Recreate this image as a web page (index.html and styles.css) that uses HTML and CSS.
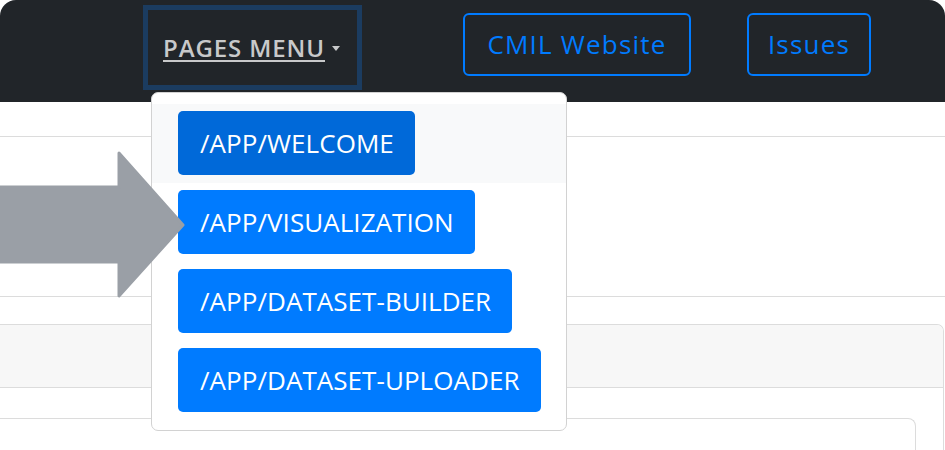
FILE: index.html
```html
<!DOCTYPE html>
<html>
<head>
<meta charset="utf-8">
<link rel="stylesheet" href="styles.css">
</head>
<body>
<div class="frame">
  <nav class="navbar">
    <div class="dropdown">
      <a class="dropdown-toggle" href="#"><span class="toggle-text">PAGES MENU</span><span class="caret"></span></a>
      <div class="dropdown-menu">
        <div class="dropdown-item active"><a class="btn-primary hover" href="#">/APP/WELCOME</a></div>
        <div class="dropdown-item"><a class="btn-primary" href="#">/APP/VISUALIZATION</a></div>
        <div class="dropdown-item"><a class="btn-primary" href="#">/APP/DATASET-BUILDER</a></div>
        <div class="dropdown-item"><a class="btn-primary" href="#">/APP/DATASET-UPLOADER</a></div>
      </div>
    </div>
    <a class="btn-outline cmil" href="#">CMIL Website</a>
    <a class="btn-outline issues" href="#">Issues</a>
  </nav>
  <main class="content">
    <div class="band band-top"></div>
    <div class="band band-mid"></div>
    <div class="card">
      <div class="card-header"></div>
      <div class="card-body">
        <div class="inner-card"></div>
      </div>
    </div>
  </main>
  <svg class="arrow" width="190" height="150" viewBox="0 0 190 150">
    <polygon points="-5,37 119,37 119,3 183,75 119,146 119,112 -5,112" />
  </svg>
</div>
</body>
</html>
```
FILE: styles.css
```css
* { box-sizing: border-box; }
html, body { margin: 0; padding: 0; background: #ffffff; }
body { font-family: "Open Sans", "Noto Sans", sans-serif; }

.frame {
  position: relative;
  width: 945px;
  height: 450px;
  overflow: hidden;
  border-radius: 16px 16px 0 0;
  background: #ffffff;
}

.navbar {
  height: 102px;
  background: #212529;
  display: flex;
  justify-content: flex-end;
  align-items: flex-start;
  padding-right: 74px;
}

.dropdown {
  position: relative;
  margin-top: 5px;
  margin-right: 101px;
  z-index: 2;
}

.dropdown-toggle {
  display: flex;
  align-items: center;
  width: 219px;
  height: 85px;
  border: 5px solid #1b3c60;
  padding: 0 0 0 15px;
  color: #c8c9ca;
  text-decoration: none;
}

.toggle-text {
  font-size: 24px;
  font-weight: 600;
  text-decoration: underline;
  text-underline-offset: 3px;
  text-decoration-thickness: 2px;
  letter-spacing: 0.9px;
}

.caret {
  display: inline-block;
  margin-left: 7px;
  margin-top: 2px;
  width: 0;
  height: 0;
  border-top: 5px solid #c8c9ca;
  border-left: 4px solid transparent;
  border-right: 4px solid transparent;
}

.dropdown-menu {
  position: absolute;
  left: 8px;
  top: 87px;
  width: 416px;
  background: #ffffff;
  border: 1px solid #d2d2d2;
  border-radius: 7px;
  padding: 11px 0 10px;
}

.dropdown-item {
  padding: 7px 10px 8px 26px;
  display: flex;
}
.dropdown-item.active { background: #f8f9fa; }

.btn-primary {
  display: flex;
  align-items: center;
  height: 64px;
  padding: 0 21px 1px 22px;
  background: #007bff;
  color: #ffffff;
  border-radius: 5px;
  font-size: 26px;
  white-space: nowrap;
  text-decoration: none;
  letter-spacing: 0.05px;
}
.btn-primary.hover { background: #0069d9; }

.btn-outline {
  display: flex;
  align-items: center;
  justify-content: center;
  margin-top: 13px;
  height: 63px;
  border: 2px solid #007bff;
  border-radius: 6px;
  color: #007bff;
  font-size: 26px;
  letter-spacing: 1.2px;
  white-space: nowrap;
  text-decoration: none;
  padding-bottom: 2px;
}
.cmil { width: 228px; margin-right: 56px; }
.issues { width: 124px; }

.content { position: relative; }

.band-top {
  height: 35px;
  border-bottom: 1px solid #dcdcdc;
}
.band-mid {
  height: 160px;
  border-bottom: 1px solid #dcdcdc;
}

.card {
  margin: 27px 1px 0 -10px;
  border: 1px solid #dcdcdc;
  border-bottom: none;
  border-radius: 0 7px 0 0;
  height: 140px;
}
.card-header {
  height: 63px;
  background: #f7f7f7;
  border-bottom: 1px solid #dcdcdc;
  border-radius: 0 6px 0 0;
}
.card-body {
  padding: 30px 27px 0 0;
}
.inner-card {
  margin-left: -10px;
  height: 60px;
  border: 1px solid #dcdcdc;
  border-bottom: none;
  border-radius: 0 8px 0 0;
}

.arrow {
  position: absolute;
  left: 0;
  top: 150px;
  z-index: 5;
  overflow: visible;
}
.arrow polygon {
  fill: #9a9fa6;
  stroke: #9a9fa6;
  stroke-width: 3;
  stroke-linejoin: round;
}
```
